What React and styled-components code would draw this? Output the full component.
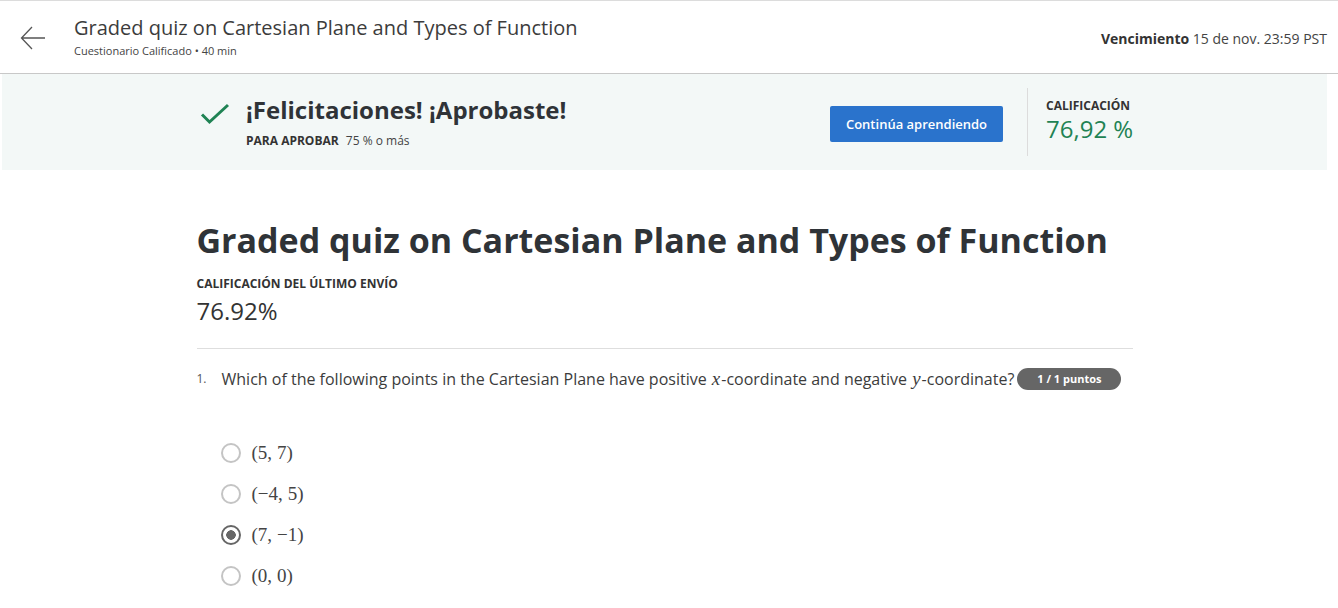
import { createGlobalStyle, styled } from 'styled-components';

const GlobalStyle = createGlobalStyle`
  body {
    margin: 0;
    font-family: 'Open Sans', 'Liberation Sans', sans-serif;
    color: #373a3c;
    background: #fff;
  }
`;

const options = [
  { a: '5', b: '7', checked: false },
  { a: '−4', b: '5', checked: false },
  { a: '7', b: '−1', checked: true },
  { a: '0', b: '0', checked: false },
];

const App = () => {
  return (
    <Page>
      <GlobalStyle />
      <Header>
        <BackButton>
          <svg width="26" height="24" viewBox="0 0 26 24">
            <path
              d="M25 12H2M12 1L1.5 12L12 23"
              fill="none"
              stroke="#555"
              strokeWidth="1.3"
            />
          </svg>
        </BackButton>
        <TitleBlock>
          <h1>Graded quiz on Cartesian Plane and Types of Function</h1>
          <p>Cuestionario Calificado • 40 min</p>
        </TitleBlock>
        <Due>
          <b>Vencimiento</b> 15 de nov. 23:59 PST
        </Due>
      </Header>

      <Banner>
        <BannerInner>
          <Passed>
            <svg width="30" height="22" viewBox="0 0 30 22">
              <path
                d="M2 11.5L9.5 19L28 2"
                fill="none"
                stroke="#1f8354"
                strokeWidth="3"
              />
            </svg>
            <div>
              <h2>¡Felicitaciones! ¡Aprobaste!</h2>
              <p>
                <b>PARA APROBAR</b> 75 % o más
              </p>
            </div>
          </Passed>
          <Continue>Continúa aprendiendo</Continue>
          <Grade>
            <span>CALIFICACIÓN</span>
            <strong>76,92 %</strong>
          </Grade>
        </BannerInner>
      </Banner>

      <Body>
        <Content>
          <MainTitle>Graded quiz on Cartesian Plane and Types of Function</MainTitle>
          <Label>CALIFICACIÓN DEL ÚLTIMO ENVÍO</Label>
          <Score>76.92%</Score>
          <Divider />
          <Question>
            <Num>1.</Num>
            <QText>
              Which of the following points in the Cartesian Plane have positive{' '}
              <MathVar>x</MathVar>-coordinate and negative <MathVar>y</MathVar>
              -coordinate?
            </QText>
            <Badge>1 / 1 puntos</Badge>
          </Question>
          <Options>
            {options.map((opt, i) => (
              <Option key={i}>
                <Radio $checked={opt.checked} />
                <MathText>
                  ({opt.a}
                  <Comma>,</Comma>
                  {opt.b})
                </MathText>
              </Option>
            ))}
          </Options>
        </Content>
      </Body>
    </Page>
  );
};
export default App;

const Page = styled.div`
  width: 1338px;
  min-height: 608px;
  overflow: hidden;
`;

const Header = styled.header`
  height: 72px;
  display: flex;
  align-items: center;
  border-top: 1px solid #dcdcdc;
  border-bottom: 1px solid #c8c8c8;
  padding: 0 11px 0 20px;
`;

const BackButton = styled.div`
  width: 26px;
  height: 24px;
  margin-top: 2px;
  margin-right: 28px;
  display: flex;
`;

const TitleBlock = styled.div`
  flex: 1;
  margin-top: -2px;
  h1 {
    margin: 0;
    font-size: 20px;
    font-weight: 400;
    color: #3c3c3c;
    line-height: 28px;
  }
  p {
    margin: 1px 0 0;
    font-size: 11px;
    color: #444;
    line-height: 16px;
  }
`;

const Due = styled.div`
  font-size: 14px;
  color: #444;
  margin-top: 2px;
  b {
    font-weight: 700;
    color: #333;
  }
`;

const Banner = styled.section`
  margin: 0 11px 0 2px;
  height: 96px;
  background-color: #f3f8f7;
`;

const BannerInner = styled.div`
  width: 936px;
  margin: 0 auto;
  padding-left: 1px;
  height: 100%;
  display: flex;
  align-items: center;
`;

const Passed = styled.div`
  flex: 1;
  display: flex;
  align-items: flex-start;
  gap: 16px;
  margin-top: -1px;
  svg {
    margin-top: 9px;
    margin-left: 3px;
  }
  h2 {
    margin: 0;
    font-size: 24px;
    font-weight: 700;
    color: #2f3337;
    line-height: 32px;
  }
  p {
    margin: 6px 0 0;
    font-size: 12px;
    color: #444;
    b {
      font-weight: 700;
      margin-right: 4px;
      color: #333;
    }
  }
`;

const Continue = styled.button`
  width: 173px;
  height: 36px;
  border: none;
  border-radius: 2px;
  background-color: #2a73cc;
  color: #fff;
  font-family: inherit;
  font-size: 13px;
  font-weight: 600;
  margin-right: 24px;
  margin-top: 4px;
`;

const Grade = styled.div`
  width: 106px;
  height: 68px;
  border-left: 1px solid #dcdcdc;
  padding-left: 18px;
  display: flex;
  flex-direction: column;
  padding-top: 10px;
  box-sizing: border-box;
  white-space: nowrap;
  span {
    font-size: 12px;
    font-weight: 700;
    color: #333;
    line-height: 16px;
  }
  strong {
    font-size: 24px;
    font-weight: 400;
    color: #1f8354;
    line-height: 30px;
  }
`;

const Body = styled.div`
  padding-right: 9px;
`;

const Content = styled.main`
  width: 936px;
  margin: 0 auto;
  padding-top: 46px;
`;

const MainTitle = styled.h1`
  margin: 0;
  font-size: 34px;
  font-weight: 700;
  color: #2f3337;
  line-height: 48px;
`;

const Label = styled.div`
  margin-top: 12px;
  font-size: 12px;
  font-weight: 700;
  color: #333;
  line-height: 16px;
`;

const Score = styled.div`
  font-size: 24px;
  color: #333;
  line-height: 32px;
  margin-top: 3px;
`;

const Divider = styled.hr`
  border: none;
  border-top: 1px solid #dedede;
  margin: 21px 0 0;
`;

const Question = styled.div`
  display: flex;
  align-items: center;
  margin-top: 18px;
  height: 24px;
`;

const Num = styled.span`
  font-size: 12px;
  color: #555;
  width: 25px;
  margin-top: -2px;
`;

const QText = styled.span`
  font-size: 16px;
  color: #3c3c3c;
`;

const MathVar = styled.i`
  font-family: 'Liberation Serif', 'DejaVu Serif', serif;
  font-size: 19px;
  margin: 0 1px;
`;

const Badge = styled.span`
  background-color: #666;
  color: #fff;
  font-size: 11px;
  font-weight: 700;
  border-radius: 12px;
  padding: 0 20px;
  height: 22px;
  line-height: 22px;
  margin-left: 3px;
`;

const Options = styled.div`
  display: flex;
  flex-direction: column;
  gap: 17px;
  padding: 50px 0 0 24px;
`;

const Option = styled.label`
  display: flex;
  align-items: center;
  gap: 11px;
  height: 24px;
`;

const Radio = styled.span`
  width: 16px;
  height: 16px;
  border-radius: 50%;
  border: 2px solid ${(p) => (p.$checked ? '#666' : '#c4c4c4')};
  background: ${(p) =>
    p.$checked ? 'radial-gradient(circle, #666 0 4.5px, #fff 5px)' : '#fff'};
`;

const MathText = styled.span`
  font-family: 'Liberation Serif', 'DejaVu Serif', serif;
  font-size: 19px;
  color: #444;
`;

const Comma = styled.span`
  margin-right: 5px;
`;
